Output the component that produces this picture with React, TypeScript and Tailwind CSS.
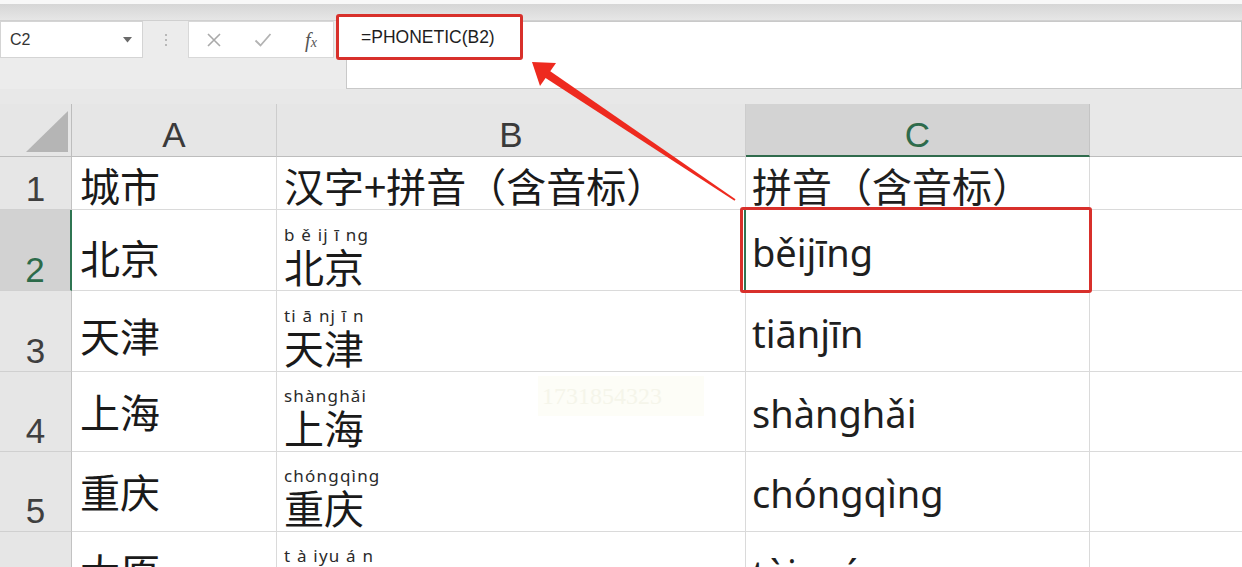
import React from "react";

const CJK = "font-['Noto_Sans_CJK_SC',sans-serif]";
const LAT = "font-['Noto_Sans','Noto_Sans_CJK_SC',sans-serif]";
const HDR = "font-['Liberation_Sans',Arial,sans-serif]";

type Row = {
  n: number;
  h: string;
  a: string;
  aPb: string;
  bPin?: string;
  b: string;
  c: string;
  cCjk?: boolean;
};

const rows: Row[] = [
  { n: 1, h: "h-[53px]", a: "城市", aPb: "pb-[4px]", b: "汉字+拼音（含音标）", c: "拼音（含音标）", cCjk: true },
  { n: 2, h: "h-[81px]", a: "北京", aPb: "pb-[13px]", bPin: "b ě ij ī ng", b: "北京", c: "běijīng" },
  { n: 3, h: "h-[81px]", a: "天津", aPb: "pb-[16px]", bPin: "ti ā nj ī n", b: "天津", c: "tiānjīn" },
  { n: 4, h: "h-[80px]", a: "上海", aPb: "pb-[20px]", bPin: "shànghǎi", b: "上海", c: "shànghǎi" },
  { n: 5, h: "h-[80px]", a: "重庆", aPb: "pb-[20px]", bPin: "chóngqìng", b: "重庆", c: "chóngqìng" },
  { n: 6, h: "h-[80px]", a: "太原", aPb: "pb-[20px]", bPin: "t à iyu á n", b: "太原", c: "tàiyuán" },
];

function GridRow({ r }: { r: Row }) {
  const active = r.n === 2;
  return (
    <div className={`grid grid-cols-[72px_205px_469px_344px_1fr] ${r.h} shrink-0`}>
      <div
        className={`flex items-end justify-center pb-[3px] border-b border-[#d0d0d0] ${
          active
            ? "bg-[#d2d2d2] text-[#2c6b4a] border-r-2 border-r-[#2f7552]"
            : "bg-[#e6e6e6] text-[#3f3f3f] border-r border-r-[#c2c2c2]"
        }`}
      >
        <span className={`${HDR} text-[35px] leading-none`}>{r.n}</span>
      </div>
      <div className={`bg-white border-b border-r border-[#dadada] flex items-end pl-[8px] ${r.aPb}`}>
        <span className={`${CJK} text-[40px] leading-none text-[#1a1a1a] whitespace-nowrap`}>{r.a}</span>
      </div>
      <div className="bg-white border-b border-r border-[#dadada] flex flex-col justify-end pl-[7px] pb-[4px]">
        {r.bPin && (
          <span className={`${LAT} text-[17px] leading-none tracking-[1.2px] text-[#2a2a2a] mb-[3px] whitespace-nowrap`}>
            {r.bPin}
          </span>
        )}
        <span className={`${CJK} text-[40px] leading-none text-[#1a1a1a] whitespace-nowrap`}>{r.b}</span>
      </div>
      <div
        className={`bg-white border-b border-r border-[#dadada] flex items-end pl-[6px] ${
          r.cCjk ? "pb-[4px]" : "pb-[19px]"
        }`}
      >
        <span
          className={`${r.cCjk ? CJK + " text-[40px]" : LAT + " text-[38px]"} leading-none text-[#1f1f1f] whitespace-nowrap`}
        >
          {r.c}
        </span>
      </div>
      <div className="bg-white border-b border-[#dadada]" />
    </div>
  );
}

export default function App() {
  return (
    <div className="relative w-[1242px] h-[567px] overflow-hidden bg-[#e8e8e8] flex flex-col">
      {/* top strip */}
      <div className="h-[4px] bg-[#f8f8f8] shrink-0" />
      <div className="h-[17px] bg-linear-to-b from-[#d6d6d6] to-[#e6e6e6] border-b border-[#d0d0d0] shrink-0" />

      {/* formula bar */}
      <div className="flex h-[68px] shrink-0 bg-[#ececec]">
        <div className="w-[346px] flex items-start shrink-0">
          <div className="w-[143px] h-[37px] bg-white border border-[#d4d4d4] flex items-center justify-between pl-[9px] pr-[10px]">
            <span className="font-['Liberation_Sans',Arial,sans-serif] text-[16px] text-[#333]">C2</span>
            <svg width="9" height="6" viewBox="0 0 9 6">
              <path d="M0 0 L9 0 L4.5 5.5 Z" fill="#6a6a6a" />
            </svg>
          </div>
          <div className="w-[45px] h-[37px] flex flex-col items-center justify-center gap-[3px]">
            <div className="w-[2px] h-[2px] bg-[#b8b8b8]" />
            <div className="w-[2px] h-[2px] bg-[#b8b8b8]" />
            <div className="w-[2px] h-[2px] bg-[#b8b8b8]" />
          </div>
          <div className="w-[146px] h-[37px] bg-white border border-[#d8d8d8] flex items-center">
            <div className="w-[48px] flex justify-center pl-[2px]">
              <svg width="16" height="16" viewBox="0 0 16 16">
                <path d="M2 2 L14 14 M14 2 L2 14" stroke="#a9a9a9" strokeWidth="1.6" fill="none" />
              </svg>
            </div>
            <div className="w-[52px] flex justify-center">
              <svg width="18" height="16" viewBox="0 0 18 16">
                <path d="M1.5 8.5 L6.5 13.5 L16.5 2" stroke="#b3b3b3" strokeWidth="1.8" fill="none" />
              </svg>
            </div>
            <div className="flex-1 flex justify-center">
              <span className="font-['Liberation_Serif',serif] italic text-[20px] text-[#555] leading-none">
                f<span className="text-[14px]">x</span>
              </span>
            </div>
          </div>
        </div>
        <div className="flex-1 bg-white border border-[#c9c9c9]" />
      </div>

      <div className="h-[15px] shrink-0" />

      {/* column headers */}
      <div className="grid grid-cols-[72px_205px_469px_344px_1fr] h-[53px] shrink-0">
        <div className="relative bg-[#e6e6e6] border-r border-b border-[#bdbdbd]">
          <svg className="absolute right-[3px] bottom-[4px]" width="42" height="41" viewBox="0 0 42 41">
            <path d="M0 41 L42 0 L42 41 Z" fill="#b5b5b5" />
          </svg>
        </div>
        <div className="bg-[#e6e6e6] border-r border-r-[#cdcdcd] border-b border-b-[#bdbdbd] flex items-end justify-center pb-[4px]">
          <span className={`${HDR} text-[35px] leading-none text-[#3a3a3a]`}>A</span>
        </div>
        <div className="bg-[#e6e6e6] border-r border-r-[#cdcdcd] border-b border-b-[#bdbdbd] flex items-end justify-center pb-[4px]">
          <span className={`${HDR} text-[35px] leading-none text-[#3a3a3a]`}>B</span>
        </div>
        <div className="bg-[#d3d3d3] border-r border-r-[#c4c4c4] border-b-2 border-b-[#2f6b4c] flex items-end justify-center pb-[3px]">
          <span className={`${HDR} text-[35px] leading-none text-[#2e6b4b]`}>C</span>
        </div>
        <div className="bg-[#e8e8e8] border-b border-[#bdbdbd]" />
      </div>

      {/* data rows */}
      {rows.map((r) => (
        <GridRow key={r.n} r={r} />
      ))}

      {/* faint watermark */}
      <div className="absolute left-[538px] top-[376px] w-[166px] h-[40px] bg-[#fdfdf7] flex items-center pl-[4px]">
        <span className="font-['Liberation_Serif',serif] text-[24px] text-[#f5f5ea] leading-none">1731854323</span>
      </div>

      {/* active cell marker */}
      <div className="absolute left-[744px] top-[210px] w-[2px] h-[81px] bg-[#2f7552]" />

      {/* red highlight boxes */}
      <div className="absolute left-[336px] top-[14px] w-[187px] h-[46px] bg-white border-[3px] border-[#d8302b] rounded-[3px] flex items-center pl-[22px]">
        <span className="font-['Liberation_Sans',Arial,sans-serif] text-[17.5px] text-[#1e1e1e]">=PHONETIC(B2)</span>
      </div>
      <div className="absolute left-[740px] top-[207px] w-[352px] h-[86px] border-[3px] border-[#d8302b] rounded-[3px]" />

      {/* arrow */}
      <svg className="absolute left-0 top-0 pointer-events-none" width="1242" height="567" viewBox="0 0 1242 567">
        <path d="M544.8 77.4 L549.2 70.6 L735.5 199.3 L734.5 200.7 Z" fill="#ee2a1f" />
        <path d="M532 62 L556 63 L540 86 Z" fill="#ee2a1f" />
      </svg>
    </div>
  );
}
